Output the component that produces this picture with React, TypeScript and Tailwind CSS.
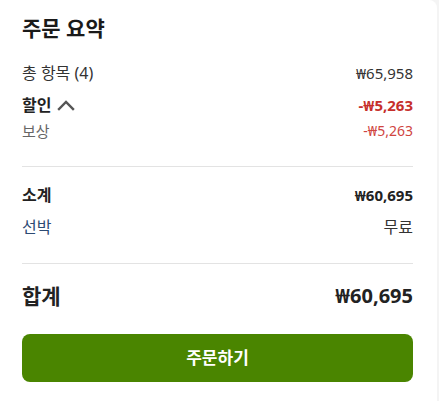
import React from 'react';

const font = { fontFamily: '"Noto Sans", "Noto Sans CJK KR", sans-serif' };

const ChevronUp = () => (
  <svg width="18" height="12" viewBox="0 0 18 12" fill="none" className="ml-1.5">
    <path d="M2 10 L9 3 L16 10" stroke="#555" strokeWidth="2.4" strokeLinecap="square" />
  </svg>
);

export default function App() {
  return (
    <div className="w-[439px] h-[401px] bg-[#f4f4f4]" style={font}>
      <div className="w-[437px] h-[401px] bg-white rounded-tr-lg pl-[22px] pr-[24px] pt-[14px]">
        <h2 className="text-[21px] font-bold text-[#1a1a1a] leading-[28px]">주문 요약</h2>

        <div className="mt-[20px] flex justify-between items-center text-[15px] text-[#333] leading-[22px]">
          <span className="text-[16px]">총 항목 (4)</span>
          <span>₩65,958</span>
        </div>

        <div className="mt-[10px] flex justify-between items-center text-[15px] leading-[22px]">
          <span className="flex items-center font-bold text-[#222] text-[16px]">
            할인
            <ChevronUp />
          </span>
          <span className="font-bold text-[#c62f2b]">-₩5,263</span>
        </div>

        <div className="mt-[5px] flex justify-between items-center text-[14px] leading-[20px]">
          <span className="text-[#666] text-[15px]">보상</span>
          <span className="text-[#d0453f]">-₩5,263</span>
        </div>

        <div className="mt-[25px] border-t border-[#e3e3e3]" />

        <div className="mt-[17px] flex justify-between items-center text-[15px] font-bold text-[#222] leading-[22px]">
          <span className="text-[16px]">소계</span>
          <span>₩60,695</span>
        </div>

        <div className="mt-[10px] flex justify-between items-center text-[16px] leading-[22px]">
          <span className="text-[#2c4a73]">선박</span>
          <span className="text-[#333]">무료</span>
        </div>

        <div className="mt-[25px] border-t border-[#e3e3e3]" />

        <div className="mt-[18px] flex justify-between items-center text-[20px] font-bold text-[#222] leading-[28px]">
          <span className="text-[21px]">합계</span>
          <span>₩60,695</span>
        </div>

        <button className="mt-[24px] w-full h-[48px] rounded-lg bg-[#4a8500] text-white text-[17px] font-semibold flex items-center justify-center">
          주문하기
        </button>
      </div>
    </div>
  );
}
